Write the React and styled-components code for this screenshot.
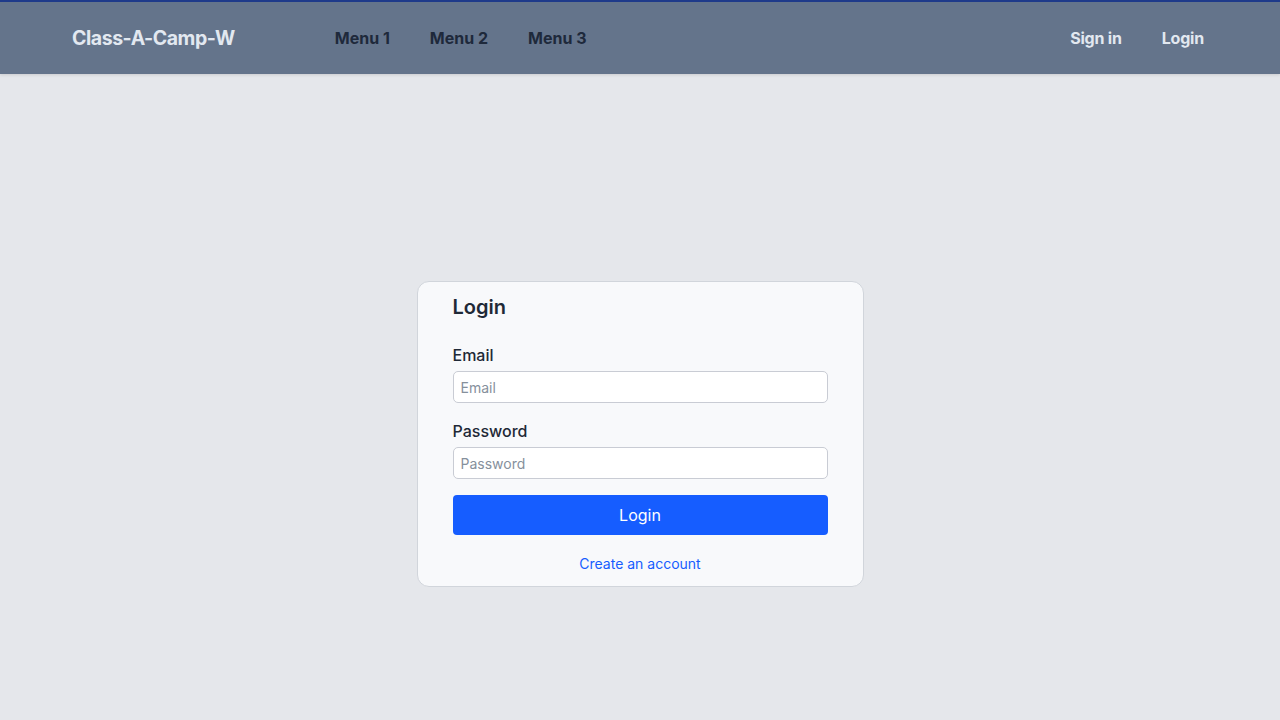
import React from "react";
import styled, { createGlobalStyle } from "styled-components";

const GlobalStyle = createGlobalStyle`
  html, body {
    margin: 0;
    padding: 0;
    overflow: hidden;
    background: #e5e7eb;
    font-family: Inter, "Noto Sans", sans-serif;
  }
  * {
    box-sizing: border-box;
  }
`;

const Header = styled.header`
  height: 74px;
  background-color: #64748b;
  border-top: 2px solid #1e3a8a;
  box-shadow: 0 1px 3px rgba(0, 0, 0, 0.12);
  display: flex;
  align-items: center;
  padding: 0 56px 0 72px;
  position: relative;
  z-index: 1;
`;

const Logo = styled.a`
  font-size: 19.5px;
  font-weight: 700;
  color: #e2e8f0;
  text-decoration: none;
  letter-spacing: -0.45px;
`;

const Nav = styled.nav`
  display: flex;
  align-items: center;
  margin-left: ${(p) => (p.$right ? "auto" : "80px")};
`;

const NavLink = styled.a`
  padding: 0 20px;
  font-size: 16px;
  font-weight: 700;
  color: ${(p) => (p.$light ? "#e2e8f0" : "#1e293b")};
  text-decoration: none;
  letter-spacing: ${(p) => (p.$light ? "-0.2px" : "0")};
  cursor: pointer;
`;

const Main = styled.main`
  height: calc(100vh - 74px);
  padding-top: 74px;
  display: flex;
  align-items: center;
  justify-content: center;
`;

const Card = styled.form`
  width: 447px;
  background: #f8f9fb;
  border: 1px solid #d1d5db;
  border-radius: 12px;
  padding: 12px 35px;
  display: flex;
  flex-direction: column;
`;

const Title = styled.h2`
  margin: 0 0 25px;
  font-size: 20px;
  font-weight: 600;
  line-height: 26px;
  color: #1f2937;
`;

const Field = styled.div`
  display: flex;
  flex-direction: column;
  gap: 6px;

  & + & {
    margin-top: 18px;
  }
`;

const Label = styled.label`
  font-size: 16px;
  font-weight: 500;
  line-height: 20px;
  color: #1f2937;
`;

const Input = styled.input`
  height: 32px;
  border: 1px solid #c9ccd4;
  border-radius: 5px;
  background: #fff;
  padding: 0 7px;
  font-family: inherit;
  font-size: 14px;
  color: #1f2937;
  outline: none;

  &::placeholder {
    color: #86909c;
  }
`;

const Button = styled.button`
  height: 40px;
  margin-top: 16px;
  border: none;
  border-radius: 4px;
  background: #165dff;
  color: #fff;
  font-family: inherit;
  font-size: 16px;
  cursor: pointer;
`;

const Footer = styled.div`
  text-align: center;
  margin-top: 18px;
  line-height: 20px;
`;

const Link = styled.a`
  font-size: 14px;
  color: #165dff;
  text-decoration: none;
`;

export default function App() {
  return (
    <>
      <GlobalStyle />
      <Header>
        <Logo>Class-A-Camp-W</Logo>
        <Nav>
          <NavLink>Menu 1</NavLink>
          <NavLink>Menu 2</NavLink>
          <NavLink>Menu 3</NavLink>
        </Nav>
        <Nav $right>
          <NavLink $light>Sign in</NavLink>
          <NavLink $light>Login</NavLink>
        </Nav>
      </Header>
      <Main>
        <Card onSubmit={(e) => e.preventDefault()}>
          <Title>Login</Title>
          <Field>
            <Label>Email</Label>
            <Input type="email" placeholder="Email" />
          </Field>
          <Field>
            <Label>Password</Label>
            <Input type="password" placeholder="Password" />
          </Field>
          <Button type="submit">Login</Button>
          <Footer>
            <Link>Create an account</Link>
          </Footer>
        </Card>
      </Main>
    </>
  );
}
